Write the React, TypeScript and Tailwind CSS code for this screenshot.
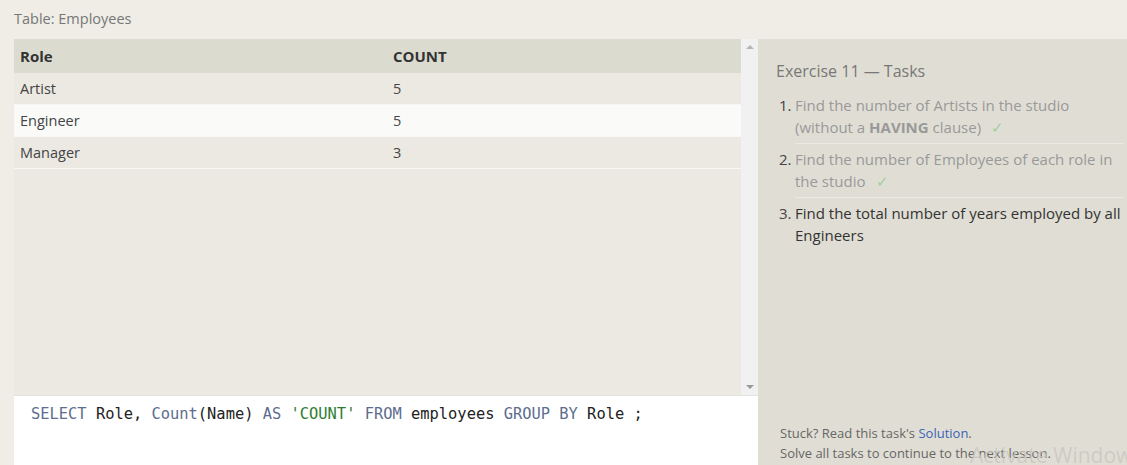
import React from "react";

const rows = [
  { role: "Artist", count: "5", hl: false },
  { role: "Engineer", count: "5", hl: true },
  { role: "Manager", count: "3", hl: false },
];

export default function App() {
  return (
    <div
      className="relative w-[1127px] h-[465px] overflow-hidden bg-[#efede6] flex flex-col"
      style={{ fontFamily: '"Open Sans", "Noto Sans", sans-serif' }}
    >
      <div className="h-[39px] pl-[14px] pt-[8px] text-[14.5px] text-[#777]">Table: Employees</div>
      <div className="flex flex-1 min-h-0">
        <div className="ml-[14px] w-[744px] flex flex-col">
          <div className="flex h-[356px]">
            <div className="flex-1 bg-[#ebe9e2]">
              <div className="flex h-[34px] items-center bg-[#dcdbd0] text-[15px] font-bold text-[#333]">
                <div className="w-[374px] pl-[6px]">Role</div>
                <div className="pl-[5px]">COUNT</div>
              </div>
              {rows.map((r) => (
                <div
                  key={r.role}
                  className={`flex h-[32px] items-center border-b border-[#f7f6f2] text-[14.5px] text-[#444] ${r.hl ? "bg-[#fafaf9]" : ""}`}
                >
                  <div className="w-[374px] pl-[6px] pt-[1px]">{r.role}</div>
                  <div className="pl-[5px] pt-[1px]">{r.count}</div>
                </div>
              ))}
            </div>
            <div className="w-[17px] bg-[#f1f1f1] flex flex-col items-center justify-between py-[6px]">
              <div className="w-0 h-0 border-l-[4px] border-r-[4px] border-b-[4px] border-l-transparent border-r-transparent border-b-[#b5b5b5]" />
              <div className="w-0 h-0 border-l-[4px] border-r-[4px] border-t-[4px] border-l-transparent border-r-transparent border-t-[#9a9a9a]" />
            </div>
          </div>
          <div className="flex-1 bg-white pl-[17px] pt-[8px] border-t border-[#e2e2e2]">
            <div
              className="text-[15.4px] leading-[20px] whitespace-pre"
              style={{ fontFamily: '"DejaVu Sans Mono", "Liberation Mono", monospace' }}
            >
              <span className="text-[#5d6d8e]">SELECT</span>
              <span className="text-[#222]"> Role, </span>
              <span className="text-[#5d6d8e]">Count</span>
              <span className="text-[#222]">(Name) </span>
              <span className="text-[#5d6d8e]">AS</span>
              <span className="text-[#222]"> </span>
              <span className="text-[#2f7d32]">'COUNT'</span>
              <span className="text-[#222]"> </span>
              <span className="text-[#5d6d8e]">FROM</span>
              <span className="text-[#222]"> employees </span>
              <span className="text-[#5d6d8e]">GROUP BY</span>
              <span className="text-[#222]"> Role ;</span>
            </div>
          </div>
        </div>
        <div className="flex-1 bg-[#e0ded4] flex flex-col pl-[18px] pr-[3px]">
          <div className="pt-[20px] text-[16px] text-[#777]">Exercise 11 — Tasks</div>
          <ol className="mt-[11px] text-[15px] leading-[22px]">
            <li className="flex pb-[4px]">
              <span className="w-[19px] pl-[3px] text-[#444]">1.</span>
              <div className="flex-1 text-[#999] border-b border-[#ebe9e3] pb-[5px]">
                Find the number of Artists in the studio (without a <b className="text-[#999]">HAVING</b> clause)
                <span className="ml-[10px] text-[#9fcf9f]">✓</span>
              </div>
            </li>
            <li className="flex pb-[4px]">
              <span className="w-[19px] pl-[3px] text-[#444]">2.</span>
              <div className="flex-1 text-[#999] border-b border-[#ebe9e3] pb-[5px]">
                Find the number of Employees of each role in the studio
                <span className="ml-[10px] text-[#9fcf9f]">✓</span>
              </div>
            </li>
            <li className="flex">
              <span className="w-[19px] pl-[3px] text-[#444]">3.</span>
              <div className="flex-1 text-[#333]">Find the total number of years employed by all Engineers</div>
            </li>
          </ol>
          <div className="mt-auto pb-[2px] pl-[4px] text-[13px] leading-[20px] text-[#666]">
            <div>
              Stuck? Read this task's <span className="text-[#3a63b8]">Solution</span>.
            </div>
            <div>Solve all tasks to continue to the next lesson.</div>
          </div>
        </div>
      </div>
      <div className="absolute left-[970px] top-[440px] text-[21px] text-[#c8c6c0]/80 whitespace-nowrap pointer-events-none">
        Activate Windows
      </div>
    </div>
  );
}
